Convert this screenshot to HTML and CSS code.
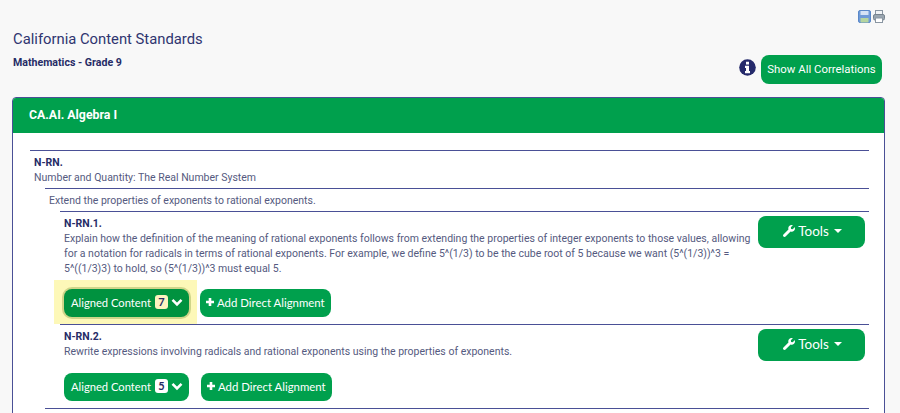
FILE: index.html
```html
<!DOCTYPE html>
<html lang="en">
<head>
<meta charset="utf-8">
<title>California Content Standards</title>
<link rel="stylesheet" href="styles.css">
</head>
<body>
<div class="page">
  <div class="top-icons">
    <svg class="ico" width="13" height="13" viewBox="0 0 13 13"><rect x="0.5" y="0.5" width="12" height="12" rx="1.5" fill="#6f9bd8" stroke="#5a88c8"/><rect x="2.5" y="1" width="8" height="4" fill="#d5e3f6"/><rect x="2.5" y="8" width="8" height="4.5" fill="#b5d5a0"/></svg>
    <svg class="ico" width="12" height="13" viewBox="0 0 12 13"><rect x="2.5" y="0.5" width="7" height="5" fill="#f2f4f6" stroke="#8a96a2"/><rect x="0.5" y="4.5" width="11" height="5.5" rx="1.5" fill="#9aa6b0" stroke="#77838e"/><rect x="2.5" y="8" width="7" height="4.5" fill="#fff" stroke="#8a96a2"/></svg>
  </div>
  <div class="head">
    <div class="head-text">
      <h1 class="title">California Content Standards</h1>
      <div class="subject">Mathematics - Grade 9</div>
    </div>
    <div class="head-actions">
      <svg class="info" width="17" height="17" viewBox="0 0 17 17"><circle cx="8.5" cy="8.5" r="8.3" fill="#252a6b"/><path d="M7 2.8h3v2.6H7zM6 6.8h4v5.2h1v2.2H6V12h1V9H6z" fill="#fff"/></svg>
      <button class="btn btn-show">Show All Correlations</button>
    </div>
  </div>
  <section class="card">
    <header class="card-head">CA.AI. Algebra I</header>
    <div class="card-body">
      <div class="level-1">
        <div class="code">N-RN.</div>
        <div class="desc">Number and Quantity: The Real Number System</div>
        <div class="level-2">
          <div class="desc">Extend the properties of exponents to rational exponents.</div>
          <div class="standard first">
            <div class="std-row">
              <div class="std-text">
                <div class="code">N-RN.1.</div>
                <div class="desc">Explain how the definition of the meaning of rational exponents follows from extending the properties of integer exponents to those values, allowing for a notation for radicals in terms of rational exponents. For example, we define 5^(1/3) to be the cube root of 5 because we want (5^(1/3))^3 = 5^((1/3)3) to hold, so (5^(1/3))^3 must equal 5.</div>
              </div>
              <button class="btn btn-tools"><svg class="wrench" width="12" height="12" viewBox="0 0 512 512"><path fill="#fff" d="M507.7 109.1c-2.2-9-13.5-12.1-20.1-5.5l-74.4 74.4-67.9-11.3-11.3-67.9 74.4-74.4c6.6-6.6 3.4-17.9-5.7-20.2-47.4-11.7-99.5.9-136.6 37.9-39.7 39.7-50.7 97.2-34.1 147.1L18.7 402.8c-25 25-25 65.5 0 90.5s65.5 25 90.5 0l213.2-213.2c50 16.7 107.4 5.5 147.3-34.3 37.1-37.1 49.7-89.3 37.9-136.7z"/></svg>Tools<span class="caret"></span></button>
            </div>
            <div class="actions">
              <span class="hl"><button class="btn btn-aligned focus">Aligned Content<span class="badge warm">7</span><svg class="chev" width="12" height="9" viewBox="0 0 12 9"><path d="M1.5 1.8 6 6.3l4.5-4.5" fill="none" stroke="#fff" stroke-width="2.6"/></svg></button></span>
              <button class="btn btn-add"><svg class="plus" width="10" height="10" viewBox="0 0 10 10"><path d="M5 1v8M1 5h8" stroke="#fff" stroke-width="2.6"/></svg>Add Direct Alignment</button>
            </div>
          </div>
          <div class="standard">
            <div class="std-row">
              <div class="std-text">
                <div class="code">N-RN.2.</div>
                <div class="desc">Rewrite expressions involving radicals and rational exponents using the properties of exponents.</div>
              </div>
              <button class="btn btn-tools"><svg class="wrench" width="12" height="12" viewBox="0 0 512 512"><path fill="#fff" d="M507.7 109.1c-2.2-9-13.5-12.1-20.1-5.5l-74.4 74.4-67.9-11.3-11.3-67.9 74.4-74.4c6.6-6.6 3.4-17.9-5.7-20.2-47.4-11.7-99.5.9-136.6 37.9-39.7 39.7-50.7 97.2-34.1 147.1L18.7 402.8c-25 25-25 65.5 0 90.5s65.5 25 90.5 0l213.2-213.2c50 16.7 107.4 5.5 147.3-34.3 37.1-37.1 49.7-89.3 37.9-136.7z"/></svg>Tools<span class="caret"></span></button>
            </div>
            <div class="actions second">
              <button class="btn btn-aligned">Aligned Content<span class="badge">5</span><svg class="chev" width="12" height="9" viewBox="0 0 12 9"><path d="M1.5 1.8 6 6.3l4.5-4.5" fill="none" stroke="#fff" stroke-width="2.6"/></svg></button>
              <button class="btn btn-add"><svg class="plus" width="10" height="10" viewBox="0 0 10 10"><path d="M5 1v8M1 5h8" stroke="#fff" stroke-width="2.6"/></svg>Add Direct Alignment</button>
            </div>
          </div>
          <div class="end-rule"></div>
        </div>
      </div>
    </div>
  </section>
</div>
</body>
</html>
```
FILE: styles.css
```css
* { box-sizing: border-box; }
html, body { margin: 0; height: 413px; overflow: hidden; }
body { background: #f8f8f8; color: #262b66; font-family: Roboto, "Open Sans", sans-serif; }
.page { padding: 10px 15px 0 12px; }
.top-icons { display: flex; justify-content: flex-end; gap: 2px; height: 13px; }
.ico { display: block; }
.head { display: flex; justify-content: space-between; height: 74px; }
.title { margin: 7px 0 0 1px; font-size: 14.8px; font-weight: 400; line-height: 18px; color: #2f3570; }
.subject { margin: 8px 0 0 1px; font-size: 10.6px; font-weight: 700; line-height: 14px; }
.head-actions { display: flex; align-items: flex-start; gap: 5px; padding-top: 32px; padding-right: 3px; }
.info { margin-top: 4px; display: block; }
.btn { border: 0; background: #00a04d; color: #fff; font-family: Lato, sans-serif; cursor: pointer; padding: 0; white-space: nowrap; }
.btn-show { width: 121px; height: 29px; border-radius: 8px; font-family: Roboto, sans-serif; font-size: 11.4px; padding-bottom: 2px; }
.card { border: 1px solid #4a5096; border-radius: 4px 4px 0 0; background: #fff; height: 340px; }
.card-head { background: #00a04d; color: #fff; height: 35px; line-height: 35px; padding-left: 16px; font-size: 12.3px; font-weight: 700; border-radius: 3px 3px 0 0; }
.card-body { padding: 17px 15px 0 17px; }
.level-1 { border-top: 1px solid #4a5096; padding-left: 4px; }
.code { font-size: 10.5px; font-weight: 700; line-height: 15px; color: #262b66; }
.level-1 > .code { margin-top: 4px; }
.desc { font-size: 10.5px; line-height: 15px; color: #555a80; }
.level-2 { margin-left: 11px; margin-top: 3px; border-top: 1px solid #4a5096; }
.level-2 > .desc { padding: 4px 0 3px 4px; }
.standard { margin-left: 15px; border-top: 1px solid #4a5096; padding: 4px 0 0 4px; }
.std-row { display: flex; justify-content: space-between; gap: 4px; }
.std-text { flex: 1; }
.btn-tools { flex: none; width: 107px; height: 32px; margin-right: 4px; border-radius: 8px; font-size: 13.5px; display: flex; align-items: center; justify-content: center; gap: 3px; padding: 0 0 2px 2px; }
.caret { width: 0; height: 0; border: 4px solid transparent; border-top-color: #fff; border-bottom: 0; margin-left: 2px; }
.wrench { display: block; }
.actions { display: flex; align-items: center; gap: 11px; margin-top: 13px; height: 28px; margin-bottom: 7px; }
.actions.second { margin-top: 12px; gap: 12px; }
.hl { position: relative; display: block; }
.hl::before { content: ""; position: absolute; left: -10px; top: -9px; width: 143px; height: 44px; background: #fdf8b8; }
.btn-aligned { position: relative; width: 125px; height: 28px; border-radius: 8px; font-size: 11.2px; display: flex; align-items: center; padding: 0 0 2px 7px; }
.btn-aligned.focus { background: #00923f; box-shadow: 0 0 0 2px #cfd58a; }
.badge { background: #fff; color: #262b66; font-weight: 700; font-size: 11px; border-radius: 3px; width: 13px; height: 14px; line-height: 14px; text-align: center; margin-left: 4px; }
.badge.warm { background: #fdf3c0; }
.chev { display: block; margin-left: 3px; }
.btn-add { position: relative; width: 131px; height: 28px; border-radius: 8px; font-size: 11.4px; display: flex; align-items: center; padding: 0 0 2px 5px; gap: 2px; }
.plus { display: block; }
.end-rule { border-top: 1px solid #4a5096; }
```
